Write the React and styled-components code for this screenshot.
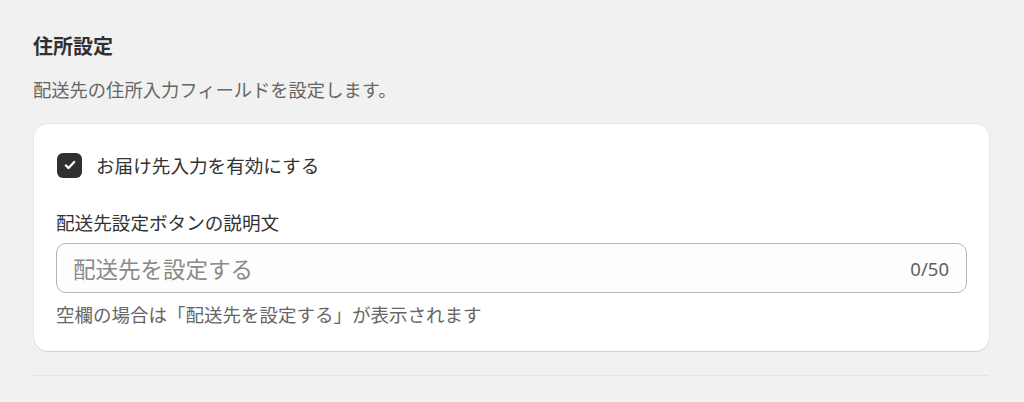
import React, { useState } from "react";
import styled, { createGlobalStyle } from "styled-components";

const GlobalStyle = createGlobalStyle`
  html, body {
    margin: 0;
    padding: 0;
    background: #f1f1f1;
    font-family: "Noto Sans CJK JP", "Noto Sans", sans-serif;
    color: #303030;
  }
`;

export default function App() {
  const [enabled, setEnabled] = useState(true);
  const [text, setText] = useState("");

  return (
    <>
      <GlobalStyle />
      <Page>
        <Title>住所設定</Title>
        <Subtitle>配送先の住所入力フィールドを設定します。</Subtitle>
        <Card>
          <CheckRow onClick={() => setEnabled(!enabled)}>
            <CheckBox $checked={enabled}>
              {enabled && (
                <svg width="14" height="14" viewBox="0 0 14 14" fill="none">
                  <path
                    d="M2.8 7.4 L5.6 10.1 L11.2 3.9"
                    stroke="#fff"
                    strokeWidth="2.2"
                    strokeLinecap="round"
                    strokeLinejoin="round"
                  />
                </svg>
              )}
            </CheckBox>
            <CheckLabel>お届け先入力を有効にする</CheckLabel>
          </CheckRow>
          <FieldLabel>配送先設定ボタンの説明文</FieldLabel>
          <InputBox>
            <TextInput
              placeholder="配送先を設定する"
              value={text}
              maxLength={50}
              onChange={e => setText(e.target.value)}
            />
            <Counter>{text.length}/50</Counter>
          </InputBox>
          <HelpText>空欄の場合は「配送先を設定する」が表示されます</HelpText>
        </Card>
        <Divider />
      </Page>
    </>
  );
}

const Page = styled.div`
  padding: 32px 35px 0 33px;
`;

const Title = styled.h2`
  margin: 0;
  font-size: 20px;
  line-height: 28px;
  font-weight: 700;
  color: #303030;
`;

const Subtitle = styled.p`
  margin: 16px 0 0 0;
  font-size: 18.3px;
  line-height: 26px;
  color: #666;
`;

const Card = styled.div`
  margin: 22px 0 0 1px;
  background: #fff;
  border-radius: 14px;
  padding: 28px 22px 25px 22px;
  box-shadow: 0 1px 0 rgba(0, 0, 0, 0.09), 0 0 0 1px rgba(0, 0, 0, 0.04);
`;

const CheckRow = styled.label`
  display: flex;
  align-items: center;
  gap: 14px;
  height: 26px;
  cursor: pointer;
`;

const CheckBox = styled.span`
  width: 25px;
  height: 25px;
  border-radius: 6px;
  margin-left: 1px;
  display: flex;
  align-items: center;
  justify-content: center;
  background: ${p => (p.$checked ? "#303030" : "#fff")};
  border: ${p => (p.$checked ? "none" : "1px solid #8a8a8a")};
  box-sizing: border-box;
`;

const CheckLabel = styled.span`
  font-size: 18.6px;
  line-height: 24px;
  color: #333;
`;

const FieldLabel = styled.div`
  margin-top: 32px;
  font-size: 18.6px;
  line-height: 24px;
  color: #333;
`;

const InputBox = styled.div`
  margin-top: 9px;
  height: 50px;
  box-sizing: border-box;
  border: 1px solid #b5b5b5;
  border-radius: 10px;
  background: #fdfdfd;
  display: flex;
  align-items: center;
  padding: 0 17px 0 16px;
`;

const TextInput = styled.input`
  flex: 1;
  border: none;
  outline: none;
  background: transparent;
  font-family: inherit;
  font-size: 22.5px;
  color: #303030;
  padding: 0;
  &::placeholder {
    color: #8a8a8a;
  }
`;

const Counter = styled.span`
  font-size: 18.5px;
  color: #616161;
  font-family: "Noto Sans", sans-serif;
`;

const HelpText = styled.div`
  margin-top: 9px;
  font-size: 18.5px;
  line-height: 24px;
  color: #666;
`;

const Divider = styled.hr`
  margin: 24px 0 0 0;
  border: none;
  height: 1px;
  background: #e3e3e3;
`;
